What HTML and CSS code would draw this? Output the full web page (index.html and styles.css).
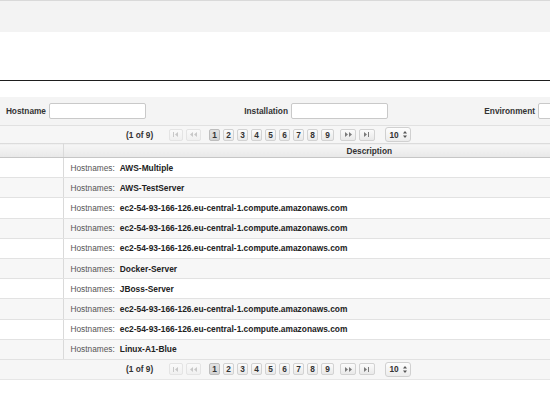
FILE: index.html
```html
<!DOCTYPE html>
<html>
<head>
<meta charset="utf-8">
<link rel="stylesheet" href="styles.css">
</head>
<body>
<div class="top-band"></div>
<div class="blank"></div>
<div class="rule"></div>
<div class="gap"></div>
<div class="panel">
  <div class="filters">
    <label class="flabel">Hostname</label><input class="finput" type="text">
    <label class="flabel">Installation</label><input class="finput" type="text">
    <label class="flabel">Environment</label><input class="finput" type="text">
  </div>
  <div class="pager pager-top">
    <span class="count">(1 of 9)</span>
    <span class="pbtn nav disabled first"><svg width="6" height="5" viewBox="0 0 6 5"><rect x="0" y="0" width="1" height="5"/><polygon points="5,0 2,2.5 5,5"/></svg></span>
    <span class="pbtn nav disabled prev"><svg width="7" height="5" viewBox="0 0 7 5"><polygon points="3,0 0,2.5 3,5"/><polygon points="7,0 4,2.5 7,5"/></svg></span>
    <span class="pbtn page active">1</span>
    <span class="pbtn page">2</span>
    <span class="pbtn page">3</span>
    <span class="pbtn page">4</span>
    <span class="pbtn page">5</span>
    <span class="pbtn page">6</span>
    <span class="pbtn page">7</span>
    <span class="pbtn page">8</span>
    <span class="pbtn page last-page">9</span>
    <span class="pbtn nav next"><svg width="7" height="5" viewBox="0 0 7 5"><polygon points="0,0 3,2.5 0,5"/><polygon points="4,0 7,2.5 4,5"/></svg></span>
    <span class="pbtn nav last"><svg width="6" height="5" viewBox="0 0 6 5"><polygon points="0,0 3,2.5 0,5"/><rect x="4" y="0" width="1" height="5"/></svg></span>
    <span class="pselect">10 <svg width="4" height="7" viewBox="0 0 4 7"><polygon points="2,0 4,2.6 0,2.6"/><polygon points="0,4.4 4,4.4 2,7"/></svg></span>
  </div>
  <table class="grid">
    <colgroup><col class="col1"><col class="col2"></colgroup>
    <thead><tr><th></th><th>Description</th></tr></thead>
    <tbody>
      <tr><td></td><td><span class="k">Hostnames:</span><b>AWS-Multiple</b></td></tr>
      <tr><td></td><td><span class="k">Hostnames:</span><b>AWS-TestServer</b></td></tr>
      <tr><td></td><td><span class="k">Hostnames:</span><b>ec2-54-93-166-126.eu-central-1.compute.amazonaws.com</b></td></tr>
      <tr><td></td><td><span class="k">Hostnames:</span><b>ec2-54-93-166-126.eu-central-1.compute.amazonaws.com</b></td></tr>
      <tr><td></td><td><span class="k">Hostnames:</span><b>ec2-54-93-166-126.eu-central-1.compute.amazonaws.com</b></td></tr>
      <tr><td></td><td><span class="k">Hostnames:</span><b>Docker-Server</b></td></tr>
      <tr><td></td><td><span class="k">Hostnames:</span><b>JBoss-Server</b></td></tr>
      <tr><td></td><td><span class="k">Hostnames:</span><b>ec2-54-93-166-126.eu-central-1.compute.amazonaws.com</b></td></tr>
      <tr><td></td><td><span class="k">Hostnames:</span><b>ec2-54-93-166-126.eu-central-1.compute.amazonaws.com</b></td></tr>
      <tr><td></td><td><span class="k">Hostnames:</span><b>Linux-A1-Blue</b></td></tr>
    </tbody>
  </table>
  <div class="pager pager-bottom">
    <span class="count">(1 of 9)</span>
    <span class="pbtn nav disabled first"><svg width="6" height="5" viewBox="0 0 6 5"><rect x="0" y="0" width="1" height="5"/><polygon points="5,0 2,2.5 5,5"/></svg></span>
    <span class="pbtn nav disabled prev"><svg width="7" height="5" viewBox="0 0 7 5"><polygon points="3,0 0,2.5 3,5"/><polygon points="7,0 4,2.5 7,5"/></svg></span>
    <span class="pbtn page active">1</span>
    <span class="pbtn page">2</span>
    <span class="pbtn page">3</span>
    <span class="pbtn page">4</span>
    <span class="pbtn page">5</span>
    <span class="pbtn page">6</span>
    <span class="pbtn page">7</span>
    <span class="pbtn page">8</span>
    <span class="pbtn page last-page">9</span>
    <span class="pbtn nav next"><svg width="7" height="5" viewBox="0 0 7 5"><polygon points="0,0 3,2.5 0,5"/><polygon points="4,0 7,2.5 4,5"/></svg></span>
    <span class="pbtn nav last"><svg width="6" height="5" viewBox="0 0 6 5"><polygon points="0,0 3,2.5 0,5"/><rect x="4" y="0" width="1" height="5"/></svg></span>
    <span class="pselect">10 <svg width="4" height="7" viewBox="0 0 4 7"><polygon points="2,0 4,2.6 0,2.6"/><polygon points="0,4.4 4,4.4 2,7"/></svg></span>
  </div>
</div>
</body>
</html>
```
FILE: styles.css
```css
html, body {
  margin: 0;
  padding: 0;
  background: #fff;
  overflow: hidden;
  font-family: "Liberation Sans", Arial, sans-serif;
  font-size: 8px;
  color: #333;
}
.top-band {
  height: 31px;
  border-top: 1px solid #d9d9d9;
  background: #f3f3f3;
}
.blank { height: 48px; }
.rule { height: 1px; background: #1e1e1e; }
.gap { height: 16px; }
.panel {
  margin-left: -138px;
  width: 813px;
}
.filters {
  display: grid;
  grid-template-columns: 184px 100px 142px 101px 146px 1fr;
  align-items: center;
  height: 28px;
  background: #f4f4f4;
  border-bottom: 1px solid #e1e1e1;
}
.flabel {
  justify-self: end;
  font-weight: bold;
  font-size: 8.3px;
  color: #333;
}
.finput {
  box-sizing: border-box;
  width: 97px;
  height: 16px;
  margin: 0 0 1px 3px;
  border: 1px solid #c9c9c9;
  border-radius: 2px;
  background: #fff;
  padding: 0;
}
.pager {
  display: flex;
  justify-content: center;
  align-items: center;
  background: #f6f6f6;
}
.pager-top { height: 17px; }
.pager-bottom {
  height: 19px;
  border-bottom: 1px solid #e6e6e6;
}
.count {
  font-weight: bold;
  font-size: 8.3px;
  color: #333;
  width: 43px;
}
.pbtn {
  box-sizing: border-box;
  display: flex;
  align-items: center;
  justify-content: center;
  height: 12px;
  border: 1px solid #d2d2d2;
  border-radius: 2px;
  background: linear-gradient(#fbfbfb, #e9e9e9);
  font-weight: bold;
  font-size: 8.3px;
  color: #333;
}
.pbtn.nav { fill: #7a7a7a; }
.pbtn.disabled {
  fill: #c8c8c8;
  border-color: #e4e4e4;
  background: linear-gradient(#fafafa, #f0f0f0);
}
.first { width: 14px; margin-right: 3px; }
.prev { width: 15px; margin-right: 8px; }
.page { width: 11px; margin-right: 3px; }
.page.last-page { width: 13px; margin-right: 6px; }
.page.active {
  background: linear-gradient(#e2e2e2, #d3d3d3);
  border-color: #bdbdbd;
}
.next { width: 16px; margin-right: 3px; }
.last { width: 16px; margin-right: 10px; }
.pselect {
  box-sizing: border-box;
  display: flex;
  align-items: center;
  justify-content: center;
  gap: 4px;
  width: 26px;
  height: 15px;
  border: 1px solid #d0d0d0;
  border-radius: 3px;
  background: linear-gradient(#fdfdfd, #ececec);
  font-weight: bold;
  font-size: 8.3px;
  color: #333;
  fill: #555;
}
.grid {
  width: 813px;
  border-collapse: collapse;
  table-layout: fixed;
}
.col1 { width: 201px; }
.grid th {
  height: 14px;
  padding: 0;
  box-sizing: border-box;
  border-top: 1px solid #dcdcdc;
  border-bottom: 1px solid #c6c6c6;
  background: linear-gradient(#f6f6f6, #e8e8e8);
  font-weight: bold;
  font-size: 8.3px;
  color: #333;
  text-align: center;
}
.grid th:first-child, .grid td:first-child {
  border-right: 1px solid #dadada;
}
.grid td {
  height: 20.2px;
  box-sizing: border-box;
  padding: 0 0 0 7px;
  border-bottom: 1px solid #e2e2e2;
  white-space: nowrap;
}
.grid tbody tr:nth-child(even) td { background: #f7f7f7; }
.k {
  color: #555;
  font-size: 8.3px;
  margin-right: 5px;
}
.grid td b {
  color: #222;
  font-size: 8.4px;
}
```
